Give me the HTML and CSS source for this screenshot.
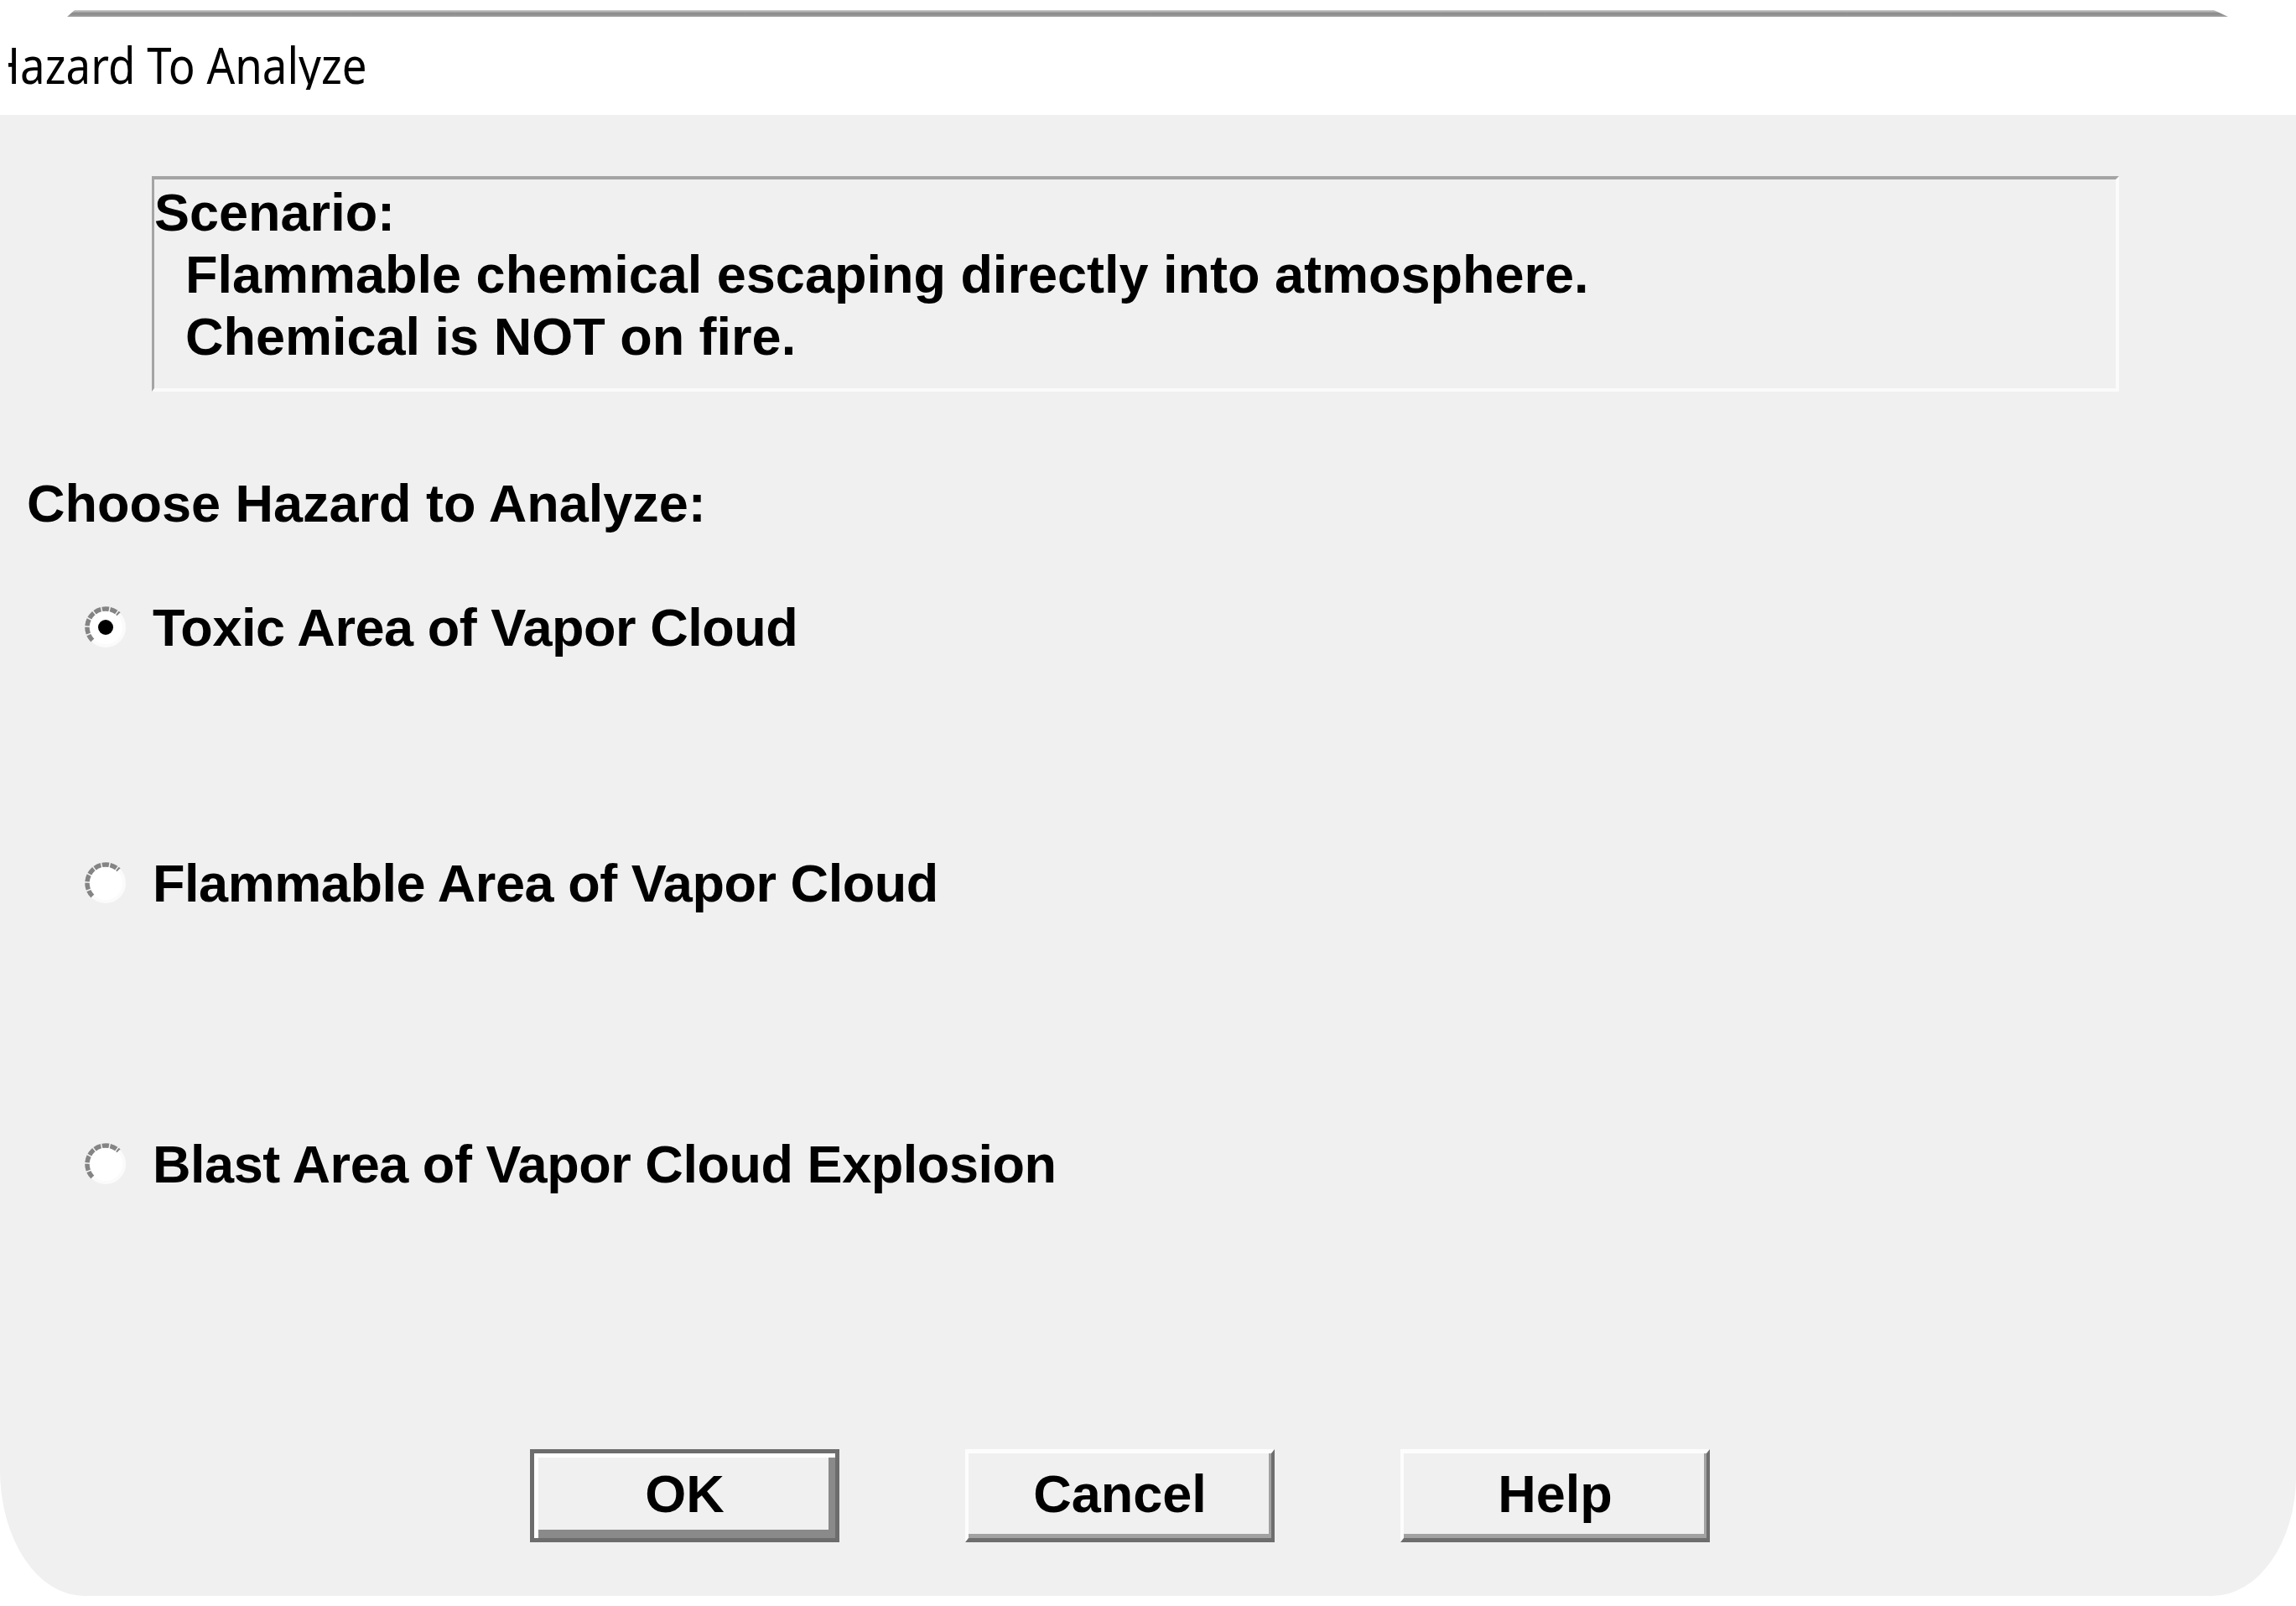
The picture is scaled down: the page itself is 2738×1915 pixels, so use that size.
FILE: index.html
```html
<!DOCTYPE html>
<html lang="en">
<head>
<meta charset="utf-8">
<title>Hazard To Analyze</title>
<link rel="stylesheet" href="styles.css">
</head>
<body>
<div class="topline"></div>
<div class="titlebar"><div class="title-clip"><span class="title">Hazard To Analyze</span></div></div>
<div class="dialog">
  <div class="scenario">
    <div class="sc-head">Scenario:</div>
    <div class="sc-line">Flammable chemical escaping directly into atmosphere.</div>
    <div class="sc-line">Chemical is NOT on fire.</div>
  </div>
  <div class="prompt">Choose Hazard to Analyze:</div>
  <div class="option opt1">
    <svg class="radio" width="52" height="52" viewBox="0 0 52 52">
      <circle cx="26" cy="26" r="21" fill="#ffffff"/>
      <path d="M10.4 41.6 A22 22 0 0 1 41.6 10.4" fill="none" stroke="#848484" stroke-width="5.5" stroke-dasharray="8 1.5"/>
      <path d="M41.6 10.4 A22 22 0 0 1 10.4 41.6" fill="none" stroke="#fbfbfb" stroke-width="4"/>
      <circle cx="26" cy="26" r="9" fill="#000000"/>
    </svg>
    <span class="opt-label">Toxic Area of Vapor Cloud</span>
  </div>
  <div class="option opt2">
    <svg class="radio" width="52" height="52" viewBox="0 0 52 52">
      <circle cx="26" cy="26" r="21" fill="#ffffff"/>
      <path d="M10.4 41.6 A22 22 0 0 1 41.6 10.4" fill="none" stroke="#848484" stroke-width="5.5" stroke-dasharray="8 1.5"/>
      <path d="M41.6 10.4 A22 22 0 0 1 10.4 41.6" fill="none" stroke="#fbfbfb" stroke-width="4"/>
    </svg>
    <span class="opt-label">Flammable Area of Vapor Cloud</span>
  </div>
  <div class="option opt3">
    <svg class="radio" width="52" height="52" viewBox="0 0 52 52">
      <circle cx="26" cy="26" r="21" fill="#ffffff"/>
      <path d="M10.4 41.6 A22 22 0 0 1 41.6 10.4" fill="none" stroke="#848484" stroke-width="5.5" stroke-dasharray="8 1.5"/>
      <path d="M41.6 10.4 A22 22 0 0 1 10.4 41.6" fill="none" stroke="#fbfbfb" stroke-width="4"/>
    </svg>
    <span class="opt-label">Blast Area of Vapor Cloud Explosion</span>
  </div>
  <div class="buttons">
    <div class="btn btn-default">OK</div>
    <div class="btn">Cancel</div>
    <div class="btn">Help</div>
  </div>
</div>
</body>
</html>
```
FILE: styles.css
```css
html, body {
  margin: 0;
  padding: 0;
  background: #ffffff;
}
body {
  width: 2738px;
  height: 1915px;
  overflow: hidden;
  font-family: "Liberation Sans", Arial, sans-serif;
  color: #000;
}
.topline {
  margin: 12px 0 0 80px;
  width: 2577px;
  height: 8px;
  background: linear-gradient(to bottom, #d0d0d0 0%, #888888 50%, #a2a2a2 100%);
  clip-path: polygon(9px 0, calc(100% - 17px) 0, 100% 100%, 0 100%);
}
.titlebar {
  box-sizing: border-box;
  height: 117px;
  padding-top: 27px;
  background: #ffffff;
  white-space: nowrap;
}
.title-clip {
  margin-left: 10px;
  overflow: hidden;
}
.title {
  display: inline-block;
  margin-left: -25px;
  font-family: "Noto Sans", "Open Sans", sans-serif;
  font-size: 60px;
  line-height: 60px;
  color: #000;
  transform: scaleX(0.88);
  transform-origin: left center;
}
.dialog {
  background: #f0f0f0;
  padding: 73px 0 64px 32px;
  border-bottom-left-radius: 100px 150px;
  border-bottom-right-radius: 100px 143px;
  font-weight: bold;
  font-size: 63px;
  line-height: 74px;
}
.scenario {
  box-sizing: border-box;
  margin-left: 149px;
  width: 2346px;
  height: 257px;
  padding-top: 2px;
  border-top: 4px solid #a4a4a4;
  border-left: 3px solid #a4a4a4;
  border-right: 4px solid #fbfbfb;
  border-bottom: 4px solid #fbfbfb;
}
.sc-line {
  padding-left: 37px;
}
.prompt {
  margin-top: 96px;
}
.option {
  display: flex;
  align-items: center;
  margin-left: 68px;
  height: 74px;
}
.opt1 { margin-top: 74px; }
.opt2 { margin-top: 231px; }
.opt3 { margin-top: 261px; }
.radio {
  flex: none;
  margin-right: 30px;
}
.opt-label {
  white-space: nowrap;
  letter-spacing: -0.45px;
}
.buttons {
  display: flex;
  gap: 150px;
  margin: 303px 0 0 600px;
}
.btn {
  box-sizing: border-box;
  width: 369px;
  height: 111px;
  padding-top: 11px;
  text-align: center;
  line-height: 74px;
  border-top: 5px solid #fdfdfd;
  border-left: 4px solid #fdfdfd;
  border-right: 4px solid #6e6e6e;
  border-bottom: 5px solid #6e6e6e;
  box-shadow: inset -3px -5px 0 #a2a2a2;
}
.btn-default {
  border: 5px solid #6d6d6d;
  box-shadow: inset 5px 5px 0 #ffffff, inset -8px -10px 0 #8a8a8a;
}
```
